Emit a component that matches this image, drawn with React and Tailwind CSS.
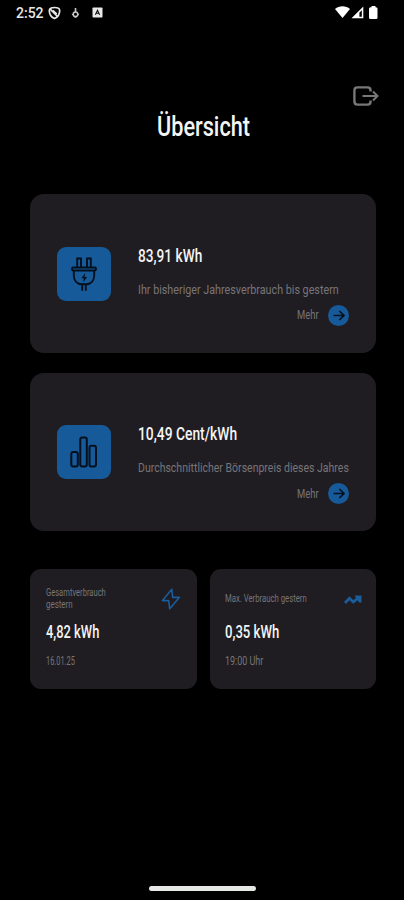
import { useLayoutEffect, useRef, useState } from 'react';

// Narrow lettering: squeezes a single line of text to the given width
function NarrowText({ width, className = '', children }) {
  const ref = useRef(null);
  const [scale, setScale] = useState(1);

  useLayoutEffect(() => {
    setScale(width / ref.current.offsetWidth);
  }, [width, children]);

  return (
    <div className={'whitespace-nowrap ' + className} style={{ width }}>
      <span ref={ref} className="inline-block origin-left" style={{ transform: `scaleX(${scale})` }}>
        {children}
      </span>
    </div>
  );
}

function StatusBar() {
  return (
    <div className="flex h-6 items-center justify-between pl-4 pr-[26px] text-[#e8e8e8]">
      <div className="flex items-center pt-px">
        <NarrowText width={28} className="text-[14px] leading-4 font-medium">2:52</NarrowText>
        <svg className="ml-[4px] h-[14px] w-[13px]" viewBox="0 0 13 14" fill="none" stroke="currentColor" strokeWidth="1.7">
          <path d="M6.500 1.500C4.500 1.500 1.300 2 1.300 4.500c0 4 2.200 6.800 5.200 8 3-1.200 5.200-4 5.200-8 0-2.500-3.200-3-5.200-3z" />
          <path d="m2 2.800 7.500 7.700M4.800 4.300l4 3.700" />
        </svg>
        <svg className="ml-[10px] h-3 w-[9px]" viewBox="0 0 9 12" fill="none" stroke="#c8c8c8">
          <path d="M4.500 1v4" strokeWidth="1.600" />
          <circle cx="4.500" cy="7.300" r="2.300" strokeWidth="1.500" />
          <path d="M1 6.800 4.500 11 8 6.800" strokeWidth="1" />
        </svg>
        <svg className="ml-[12px] h-[11px] w-[11px]" viewBox="0 0 11 11">
          <rect x="0.500" y="0.500" width="10" height="10" rx="0.800" fill="currentColor" />
          <path d="m3.400 7.700 2.100-4.500 2.100 4.500M4.200 6.300h2.600" fill="none" stroke="#111" strokeWidth="1.100" />
        </svg>
      </div>
      <div className="flex items-center text-white">
        <svg className="h-3 w-[15px]" viewBox="0 0 15 12" fill="currentColor">
          <path d="M0 3C4-.6 11-.6 15 3L7.500 12z" />
        </svg>
        <svg className="ml-px h-[13px] w-[13px]" viewBox="0 0 13 13">
          <path d="M.5 12.300 12.300.5v11.800z" fill="currentColor" />
          <path d="M8.400 6.700 10.800 4.300v6.500H8.400z" fill="#000" />
        </svg>
        <svg className="ml-[5px] h-[13px] w-[9px]" viewBox="0 0 9 13" fill="currentColor">
          <rect x="2.500" width="4" height="3" rx="0.500" />
          <rect y="1.200" width="8.500" height="11.800" rx="1.500" />
        </svg>
      </div>
    </div>
  );
}

function PlugIcon() {
  return (
    <svg className="h-[38px] w-[30px]" viewBox="0 0 30 38" fill="none" stroke="#04101e" strokeWidth="1.900">
      <path d="M8.200 12V3.500h3.800V12M18 12V3.500h3.800V12" />
      <rect x="3" y="12.500" width="24" height="3" rx="1.200" />
      <path d="M4.800 15.500v5.300c0 4.800 3.300 8.500 8 8.500h4.400c4.700 0 8-3.700 8-8.500v-5.300" />
      <path d="M13.200 29.400v6.400M16.800 29.400v6.400" />
      <path d="M16.200 18 12.400 23.200h2.500l-.8 4.300 4-5.500h-2.600z" fill="#04101e" stroke="none" />
    </svg>
  );
}

function BarsIcon() {
  return (
    <svg className="h-8 w-7" viewBox="0 0 28 32" fill="none" stroke="#04101e" strokeWidth="2">
      <rect x="1.300" y="16" width="6.500" height="14.500" rx="2" />
      <rect x="10.300" y="1.500" width="6.500" height="29" rx="2" />
      <rect x="19.500" y="9.800" width="6.500" height="20.700" rx="2" />
    </svg>
  );
}

function BoltIcon() {
  return (
    <svg className="h-[22px] w-[20px]" viewBox="0 0 20 22" fill="none" stroke="#1b5c9b" strokeWidth="1.600" strokeLinejoin="round">
      <path d="M10.800 1.200 1.500 12.600h6.200L8.700 20.800 18.300 9.400h-6.600z" />
    </svg>
  );
}

function TrendIcon() {
  return (
    <svg className="-mr-px h-[9px] w-[18px]" viewBox="0 0 18 9" fill="none" stroke="#1b5c9b" strokeWidth="2.800">
      <path d="M1 8 5.400 3.300l3.900 3.700 5.200-4.300" />
      <path d="M10.500.5H17.500v7h-2.500z" fill="#1b5c9b" stroke="none" />
    </svg>
  );
}

function LogoutIcon() {
  return (
    <svg className="h-5 w-[26px]" viewBox="0 0 26 20" fill="none" stroke="#777" strokeWidth="2.400">
      <path d="M17.500 5.500V4.300c0-1.700-1.200-2.900-2.900-2.900H4.400c-1.800 0-3 1.200-3 3v11.200c0 1.800 1.200 3 3 3h10.200c1.700 0 2.900-1.200 2.900-2.900v-1.200" />
      <path d="M9.500 10h15M20 5.500 24.500 10 20 14.500" strokeWidth="2" />
    </svg>
  );
}

function MoreButton() {
  return (
    <button type="button" className="flex items-center self-end text-[#77757a]">
      <NarrowText width={22} className="text-left text-xs leading-4">Mehr</NarrowText>
      <span className="ml-[9px] flex h-[21px] w-[21px] items-center justify-center rounded-full bg-[#175a99]">
        <svg className="h-[11px] w-[12px]" viewBox="0 0 12 11" fill="none" stroke="#04101e" strokeWidth="1.700">
          <path d="M.5 5.500H11M6.300 1l4.700 4.500L6.300 10" />
        </svg>
      </span>
    </button>
  );
}

function OverviewCard({ icon, value, valueWidth, text, textWidth, className = '' }) {
  return (
    <div className={'flex items-center rounded-[14px] bg-[#1f1d21] px-[27px] ' + className}>
      <div className="flex h-[54px] w-[54px] shrink-0 items-center justify-center rounded-[9px] bg-[#175a99]">
        {icon}
      </div>
      <div className="ml-[27px] flex flex-1 flex-col pt-[22px]">
        <NarrowText width={valueWidth} className="text-[19px] leading-6 font-medium text-[#f4f4f4]">{value}</NarrowText>
        <NarrowText width={textWidth} className="mt-[14px] text-[13px] leading-4 text-[#77757a]">{text}</NarrowText>
        <div className="mt-[7px] flex justify-end">
          <MoreButton />
        </div>
      </div>
    </div>
  );
}

function StatCard({ lines, icon, value, valueWidth, note, noteWidth }) {
  return (
    <div className="h-[120px] flex-1 rounded-[11px] bg-[#1f1d21] px-[15.5px] pt-[18px]">
      <div className="flex h-6 items-center justify-between">
        <div>
          {lines.map((line) => (
            <NarrowText key={line.text} width={line.width} className="text-[10px] leading-3 text-[#77757a]">
              {line.text}
            </NarrowText>
          ))}
        </div>
        {icon}
      </div>
      <NarrowText width={valueWidth} className="mt-[9px] text-lg leading-6 font-medium text-[#f4f4f4]">{value}</NarrowText>
      <NarrowText width={noteWidth} className="mt-[9px] text-xs leading-4 text-[#77757a]">{note}</NarrowText>
    </div>
  );
}

export default function App() {
  return (
    <div className="flex h-[900px] w-[404px] flex-col overflow-hidden bg-black font-['Roboto',sans-serif]">
      <StatusBar />

      <header className="flex h-[170px] flex-col pt-[62px]">
        <button type="button" className="mr-[25px] self-end" aria-label="Abmelden">
          <LogoutIcon />
        </button>
        <h1 className="flex justify-center pt-px pl-[3px]">
          <NarrowText width={93} className="text-[28px] leading-10 font-medium text-[#f4f4f4]">Übersicht</NarrowText>
        </h1>
      </header>

      <main className="flex flex-1 flex-col pr-7 pl-[30px]">
        <OverviewCard
          className="h-[159px]"
          icon={<PlugIcon />}
          value="83,91 kWh"
          valueWidth={64}
          text="Ihr bisheriger Jahresverbrauch bis gestern"
          textWidth={201}
        />
        <OverviewCard
          className="mt-5 h-[158px]"
          icon={<BarsIcon />}
          value="10,49 Cent/kWh"
          valueWidth={99}
          text="Durchschnittlicher Börsenpreis dieses Jahres"
          textWidth={211}
        />

        <div className="mt-[38px] flex gap-[13px]">
          <StatCard
            lines={[
              { text: 'Gesamtverbrauch', width: 60 },
              { text: 'gestern', width: 27 },
            ]}
            icon={<BoltIcon />}
            value="4,82 kWh"
            valueWidth={53}
            note="16.01.25"
            noteWidth={29}
          />
          <StatCard
            lines={[{ text: 'Max. Verbrauch gestern', width: 82 }]}
            icon={<TrendIcon />}
            value="0,35 kWh"
            valueWidth={54}
            note="19:00 Uhr"
            noteWidth={38}
          />
        </div>
      </main>

      <div className="mb-[9px] h-[5px] w-[107px] self-center rounded-full bg-[#e6e8e6]" />
    </div>
  );
}
